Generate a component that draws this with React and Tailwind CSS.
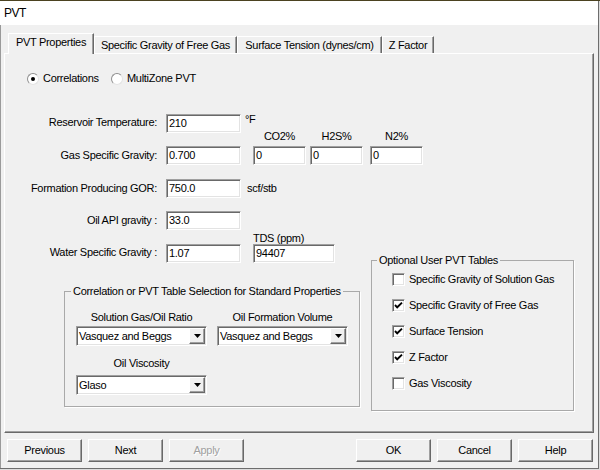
import React from 'react';

const sunken =
  'bg-white border border-t-[#a0a0a0] border-l-[#a0a0a0] border-r-white border-b-white shadow-[inset_1px_1px_0_#696969,inset_-1px_-1px_0_#e3e3e3]';
const raised =
  'bg-[#f0f0f0] border border-t-white border-l-white border-r-[#696969] border-b-[#696969] shadow-[inset_-1px_-1px_0_#a0a0a0]';

function Field({ value, w = 'w-[75px]' }) {
  return <div className={`${w} h-[19px] flex items-center pl-[2px] ${sunken}`}>{value}</div>;
}

function Radio({ checked, label, w = '' }) {
  return (
    <div className={`flex items-center gap-[4px] ${w}`}>
      <div className="w-[12px] h-[12px] rounded-full bg-white border border-t-[#8f8f8f] border-l-[#8f8f8f] border-r-[#e3e3e3] border-b-[#e3e3e3] flex items-center justify-center">
        {checked && <div className="w-[4px] h-[4px] rounded-full bg-black" />}
      </div>
      <span>{label}</span>
    </div>
  );
}

function Check({ checked, label }) {
  return (
    <div className="h-[26px] flex items-center gap-[4px]">
      <div className={`w-[13px] h-[13px] flex items-center justify-center ${sunken}`}>
        {checked && (
          <svg width="9" height="9" viewBox="0 0 9 9">
            <polyline points="1,4 3.2,6.3 8,1.6" fill="none" stroke="black" strokeWidth="1.9" />
          </svg>
        )}
      </div>
      <span>{label}</span>
    </div>
  );
}

function Select({ value }) {
  return (
    <div className={`w-[131px] h-[20px] flex items-center ${sunken}`}>
      <span className="flex-1 pl-[2px]">{value}</span>
      <div className={`w-[16px] h-[16px] mr-[1px] flex items-center justify-center ${raised}`}>
        <svg width="7" height="4" viewBox="0 0 7 4">
          <polygon points="0,0 7,0 3.5,4" fill="black" />
        </svg>
      </div>
    </div>
  );
}

function Button({ label, disabled, ml }) {
  return (
    <div
      className={`w-[75px] h-[23px] flex items-center justify-center ${ml} ${raised} ${
        disabled ? 'text-[#a0a0a0] [text-shadow:1px_1px_0_#fff]' : 'text-black'
      }`}
    >
      {label}
    </div>
  );
}

export default function App() {
  const tabs = [
    { name: 'Specific Gravity of Free Gas', w: 'w-[143px]' },
    { name: 'Surface Tension (dynes/cm)', w: 'w-[145px]' },
    { name: 'Z Factor', w: 'w-[52px]' },
  ];

  return (
    <div className="w-[600px] h-[470px] bg-[#dcdcdc] overflow-hidden flex flex-col font-['Liberation_Sans',Arial,sans-serif] text-[11px] leading-[13px] tracking-[-0.3px] text-black">
      <div className="h-px w-full bg-[#4b4220]" />
      <div className="w-[599px] h-[468px] flex flex-col border-r border-b border-[#6d6d6d]">
        {/* title bar */}
        <div className="h-[24px] bg-white flex items-center pl-[4px] text-[12px] tracking-[-0.5px]">PVT</div>

        <div className="flex-1 bg-[#f0f0f0] border-l border-[#9a9a9a] pt-[8px]">
          {/* tabs */}
          <div className="flex items-end h-[20px] pl-[7px]">
            <div className="relative z-10 w-[86px] h-[21px] -mb-px pt-[2px] text-center bg-[#f0f0f0] border-t border-l border-t-white border-l-white border-r border-r-[#696969] shadow-[inset_-1px_0_0_#a0a0a0]">
              PVT Properties
            </div>
            {tabs.map((t) => (
              <div
                key={t.name}
                className={`${t.w} h-[17px] flex items-center justify-center bg-[#f0f0f0] border-t border-l border-t-white border-l-white border-r border-r-[#696969] shadow-[inset_-1px_0_0_#a0a0a0]`}
              >
                {t.name}
              </div>
            ))}
          </div>

          {/* panel */}
          <div className="ml-[3px] w-[590px] h-[380px] flex flex-col bg-[#f0f0f0] border border-t-white border-l-white border-r-[#696969] border-b-[#696969] shadow-[inset_-1px_-1px_0_#a0a0a0]">
            <div className="mt-[18px] h-[13px] pl-[22px] flex items-center">
              <Radio checked label="Correlations" w="w-[84px]" />
              <Radio label="MultiZone PVT" />
            </div>

            {/* Reservoir Temperature */}
            <div className="mt-[29px] h-[19px] flex items-center">
              <div className="w-[152px] text-right -mt-[2px]">Reservoir Temperature:</div>
              <div className="ml-[9px]">
                <Field value="210" />
              </div>
              <div className="ml-[4px] self-start -mt-[1px]">°F</div>
            </div>

            {/* Gas Specific Gravity + composition */}
            <div className="-mt-[3px] flex items-end">
              <div className="flex items-center h-[19px]">
                <div className="w-[152px] text-right">Gas Specific Gravity:</div>
                <div className="ml-[9px]">
                  <Field value="0.700" />
                </div>
              </div>
              <div className="ml-[12px] flex flex-col items-center">
                <div>CO2%</div>
                <div className="mt-[3px]">
                  <Field value="0" w="w-[53px]" />
                </div>
              </div>
              <div className="ml-[4px] flex flex-col items-center">
                <div>H2S%</div>
                <div className="mt-[3px]">
                  <Field value="0" w="w-[53px]" />
                </div>
              </div>
              <div className="ml-[7px] flex flex-col items-center">
                <div>N2%</div>
                <div className="mt-[3px]">
                  <Field value="0" w="w-[53px]" />
                </div>
              </div>
            </div>

            {/* GOR */}
            <div className="mt-[14px] h-[19px] flex items-center">
              <div className="w-[152px] text-right">Formation Producing GOR:</div>
              <div className="ml-[9px]">
                <Field value="750.0" />
              </div>
              <div className="ml-[6px]">scf/stb</div>
            </div>

            {/* API */}
            <div className="mt-[13px] h-[19px] flex items-center">
              <div className="w-[152px] text-right">Oil API gravity :</div>
              <div className="ml-[9px]">
                <Field value="33.0" />
              </div>
            </div>

            {/* Water SG + TDS */}
            <div className="mt-[2px] flex items-end">
              <div className="flex items-center h-[19px]">
                <div className="w-[152px] text-right -mt-[2px]">Water Specific Gravity :</div>
                <div className="ml-[9px]">
                  <Field value="1.07" />
                </div>
              </div>
              <div className="ml-[12px] flex flex-col">
                <div className="leading-[12px]">TDS (ppm)</div>
                <Field value="94407" w="w-[82px]" />
              </div>
            </div>

            {/* group boxes */}
            <div className="-mt-[9px] flex items-start">
              <fieldset className="ml-[59px] mt-[31px] w-[296px] border border-[#a9a9a9] shadow-[1px_1px_0_#fff] pb-[11px]">
                <legend className="ml-[6px] px-[2px] leading-[13px]">
                  Correlation or PVT Table Selection for Standard Properties
                </legend>
                <div className="flex gap-[10px] pl-[11px]">
                  <div className="w-[131px] flex flex-col">
                    <div className="mt-[13px] text-center">Solution Gas/Oil Ratio</div>
                    <div className="mt-[2px]">
                      <Select value="Vasquez and Beggs" />
                    </div>
                    <div className="mt-[11px] text-center">Oil Viscosity</div>
                    <div className="mt-[5px]">
                      <Select value="Glaso" />
                    </div>
                  </div>
                  <div className="w-[131px] flex flex-col">
                    <div className="mt-[13px] text-center">Oil Formation Volume</div>
                    <div className="mt-[2px]">
                      <Select value="Vasquez and Beggs" />
                    </div>
                  </div>
                </div>
              </fieldset>

              <fieldset className="ml-[11px] w-[203px] border border-[#a9a9a9] shadow-[1px_1px_0_#fff] pb-[14px]">
                <legend className="ml-[5px] px-[2px] leading-[13px]">Optional User PVT Tables</legend>
                <div className="-mt-px pl-[20px] flex flex-col">
                  <Check label="Specific Gravity of Solution Gas" />
                  <Check checked label="Specific Gravity of Free Gas" />
                  <Check checked label="Surface Tension" />
                  <Check checked label="Z Factor" />
                  <Check label="Gas Viscosity" />
                </div>
              </fieldset>
            </div>
          </div>

          {/* buttons */}
          <div className="mt-[6px] flex">
            <Button label="Previous" ml="ml-[6px]" />
            <Button label="Next" ml="ml-[6px]" />
            <Button label="Apply" disabled ml="ml-[6px]" />
            <Button label="OK" ml="ml-[112px]" />
            <Button label="Cancel" ml="ml-[6px]" />
            <Button label="Help" ml="ml-[6px]" />
          </div>
        </div>
      </div>
    </div>
  );
}
